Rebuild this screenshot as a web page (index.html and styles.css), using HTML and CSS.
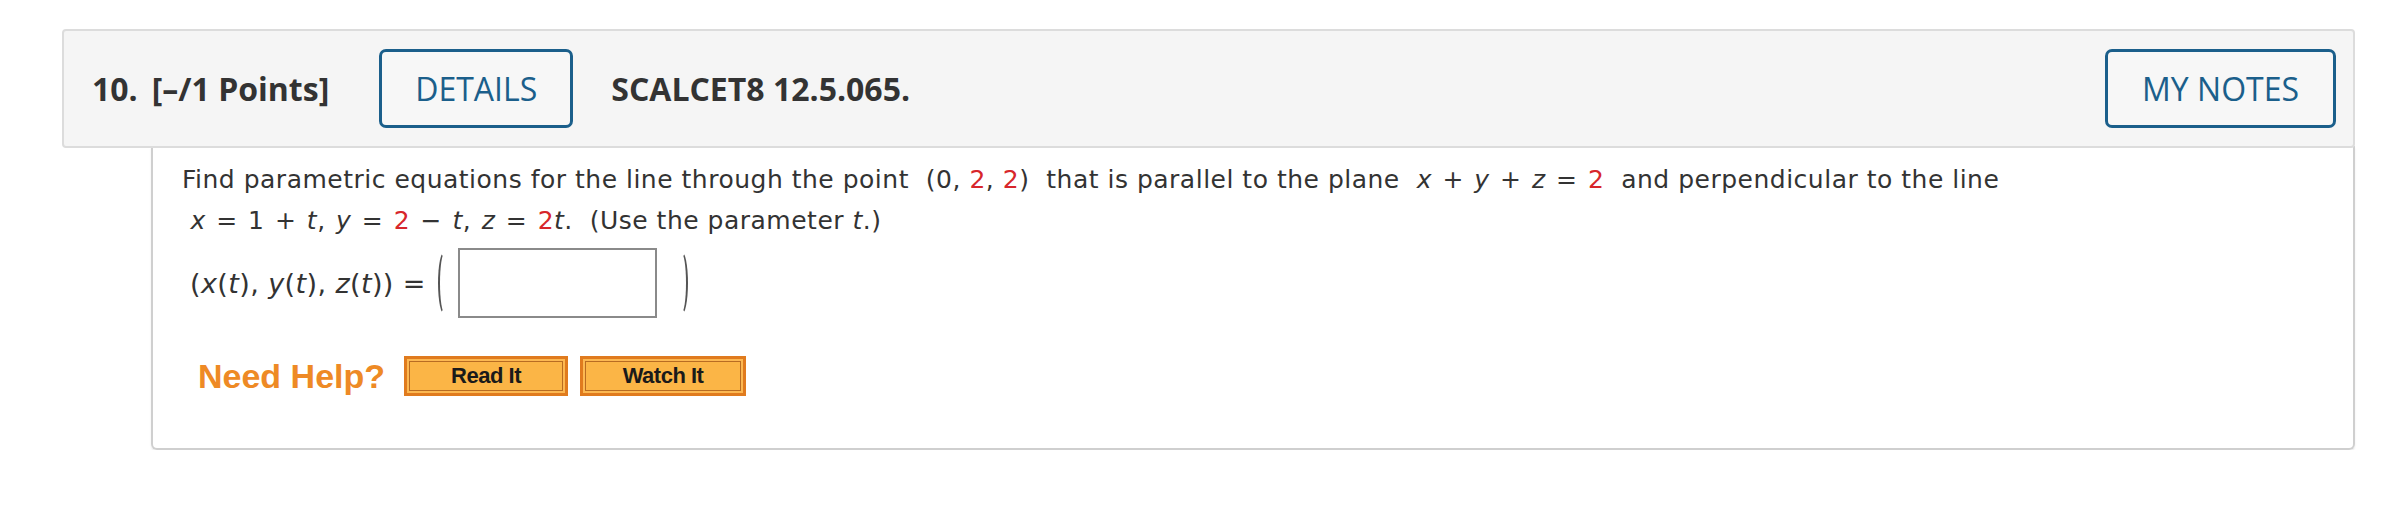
FILE: index.html
```html
<!DOCTYPE html>
<html lang="en">
<head>
    <meta charset="UTF-8">
    <title>SCALCET8 12.5.065.</title>
    <link rel="stylesheet" href="styles.css">
</head>
<body>
    <div class="question">
        <div class="q-header">
            <span class="q-number">10.</span>
            <span class="q-points">[&ndash;/1 Points]</span>
            <button class="outline-btn details-btn">DETAILS</button>
            <span class="q-ref">SCALCET8 12.5.065.</span>
            <button class="outline-btn notes-btn">MY NOTES</button>
        </div>

        <div class="q-body">
            <p class="q-text">Find parametric equations for the line through the point &nbsp;(0, <span class="red">2</span>, <span class="red">2</span>) &nbsp;that is parallel to the plane &nbsp;<span class="math"><i>x</i> + <i>y</i> + <i>z</i> = <span class="red">2</span></span> &nbsp;and perpendicular to the line<br>
            &nbsp;<span class="math"><i>x</i> = 1 + <i>t</i>, <i>y</i> = <span class="red">2</span> &minus; <i>t</i>, <i>z</i> = <span class="red">2</span><i>t</i></span>. &nbsp;(Use the parameter <i>t</i>.)</p>

            <div class="answer-row">
                <span class="answer-label">(<i>x</i>(<i>t</i>), <i>y</i>(<i>t</i>), <i>z</i>(<i>t</i>)) =</span>
                <span class="paren paren-left"></span>
                <input class="answer-input" type="text">
                <span class="paren paren-right"></span>
            </div>

            <div class="help-row">
                <span class="need-help">Need Help?</span>
                <button class="help-btn">Read It</button>
                <button class="help-btn">Watch It</button>
            </div>
        </div>
    </div>
</body>
</html>
```

FILE: styles.css
```css
body { margin: 0; padding: 29px 33px 0 62px; background-color: #fff; font-family: 'DejaVu Sans', Verdana, sans-serif; color: #333; }

.q-header { display: flex; align-items: center; height: 115px; padding: 0 17px 0 28px; background-color: #f5f5f5; border: 2px solid #dcdcdc; border-radius: 4px; font-family: 'Open Sans', sans-serif; font-size: 32px; font-weight: 700; color: #333; position: relative; z-index: 1; }
.q-number { margin-right: 14px; }
.q-points { margin-right: 50px; }
.q-ref { margin-left: 38px; flex: 1; }
.outline-btn { height: 79px; padding: 0 33px; background-color: #f7f7f7; border: 3px solid #1b5f8b; border-radius: 7px; font-family: 'Open Sans', sans-serif; font-size: 32px; font-weight: 400; color: #1b5f8b; }
.notes-btn { padding: 0 34px; }

.q-body { margin: -2px 0 0 89px; height: 289px; padding: 13px 29px 0; border: 2px solid #cfcfcf; border-top: none; border-radius: 0 0 6px 6px; box-shadow: 0 2px 2px rgba(0,0,0,0.08); }
.q-text { margin: 0; font-size: 25px; line-height: 41px; letter-spacing: 0.5px; color: #333; }
.q-text i, .answer-label i { font-style: oblique; }
.math { word-spacing: 2px; }
.red { color: #d7262b; }

.answer-row { display: flex; align-items: center; margin-top: 7px; height: 70px; font-size: 27px; color: #333; }
.answer-label { margin-left: 8px; margin-right: 12px; letter-spacing: 0.4px; }
.paren { width: 11px; height: 64px; border: 2px solid transparent; box-sizing: border-box; }
.paren-left { border-left-color: #555; border-radius: 60% 0 0 60% / 50% 0 0 50%; margin-right: 9px; }
.paren-right { border-right-color: #555; border-radius: 0 60% 60% 0 / 0 50% 50% 0; margin-left: 20px; }
.answer-input { width: 199px; height: 70px; box-sizing: border-box; border: 2px solid #8a8a8a; background: #fff; margin: 0; }

.help-row { display: flex; align-items: center; margin-top: 38px; }
.need-help { font-family: 'Liberation Sans', Arial, sans-serif; font-size: 34px; font-weight: 700; color: #ee8a25; margin: 0 19px 0 16px; }
.help-btn { height: 40px; width: 164px; margin-right: 12px; background-color: #fbb546; border: 3px solid #e07b1e; box-shadow: inset 0 0 0 2px #fcb852, inset 0 0 0 3px #b86c22; font-family: 'Liberation Sans', Arial, sans-serif; font-size: 22px; font-weight: 700; letter-spacing: -0.5px; color: #1a1a1a; }
.help-btn + .help-btn { width: 166px; }
```
